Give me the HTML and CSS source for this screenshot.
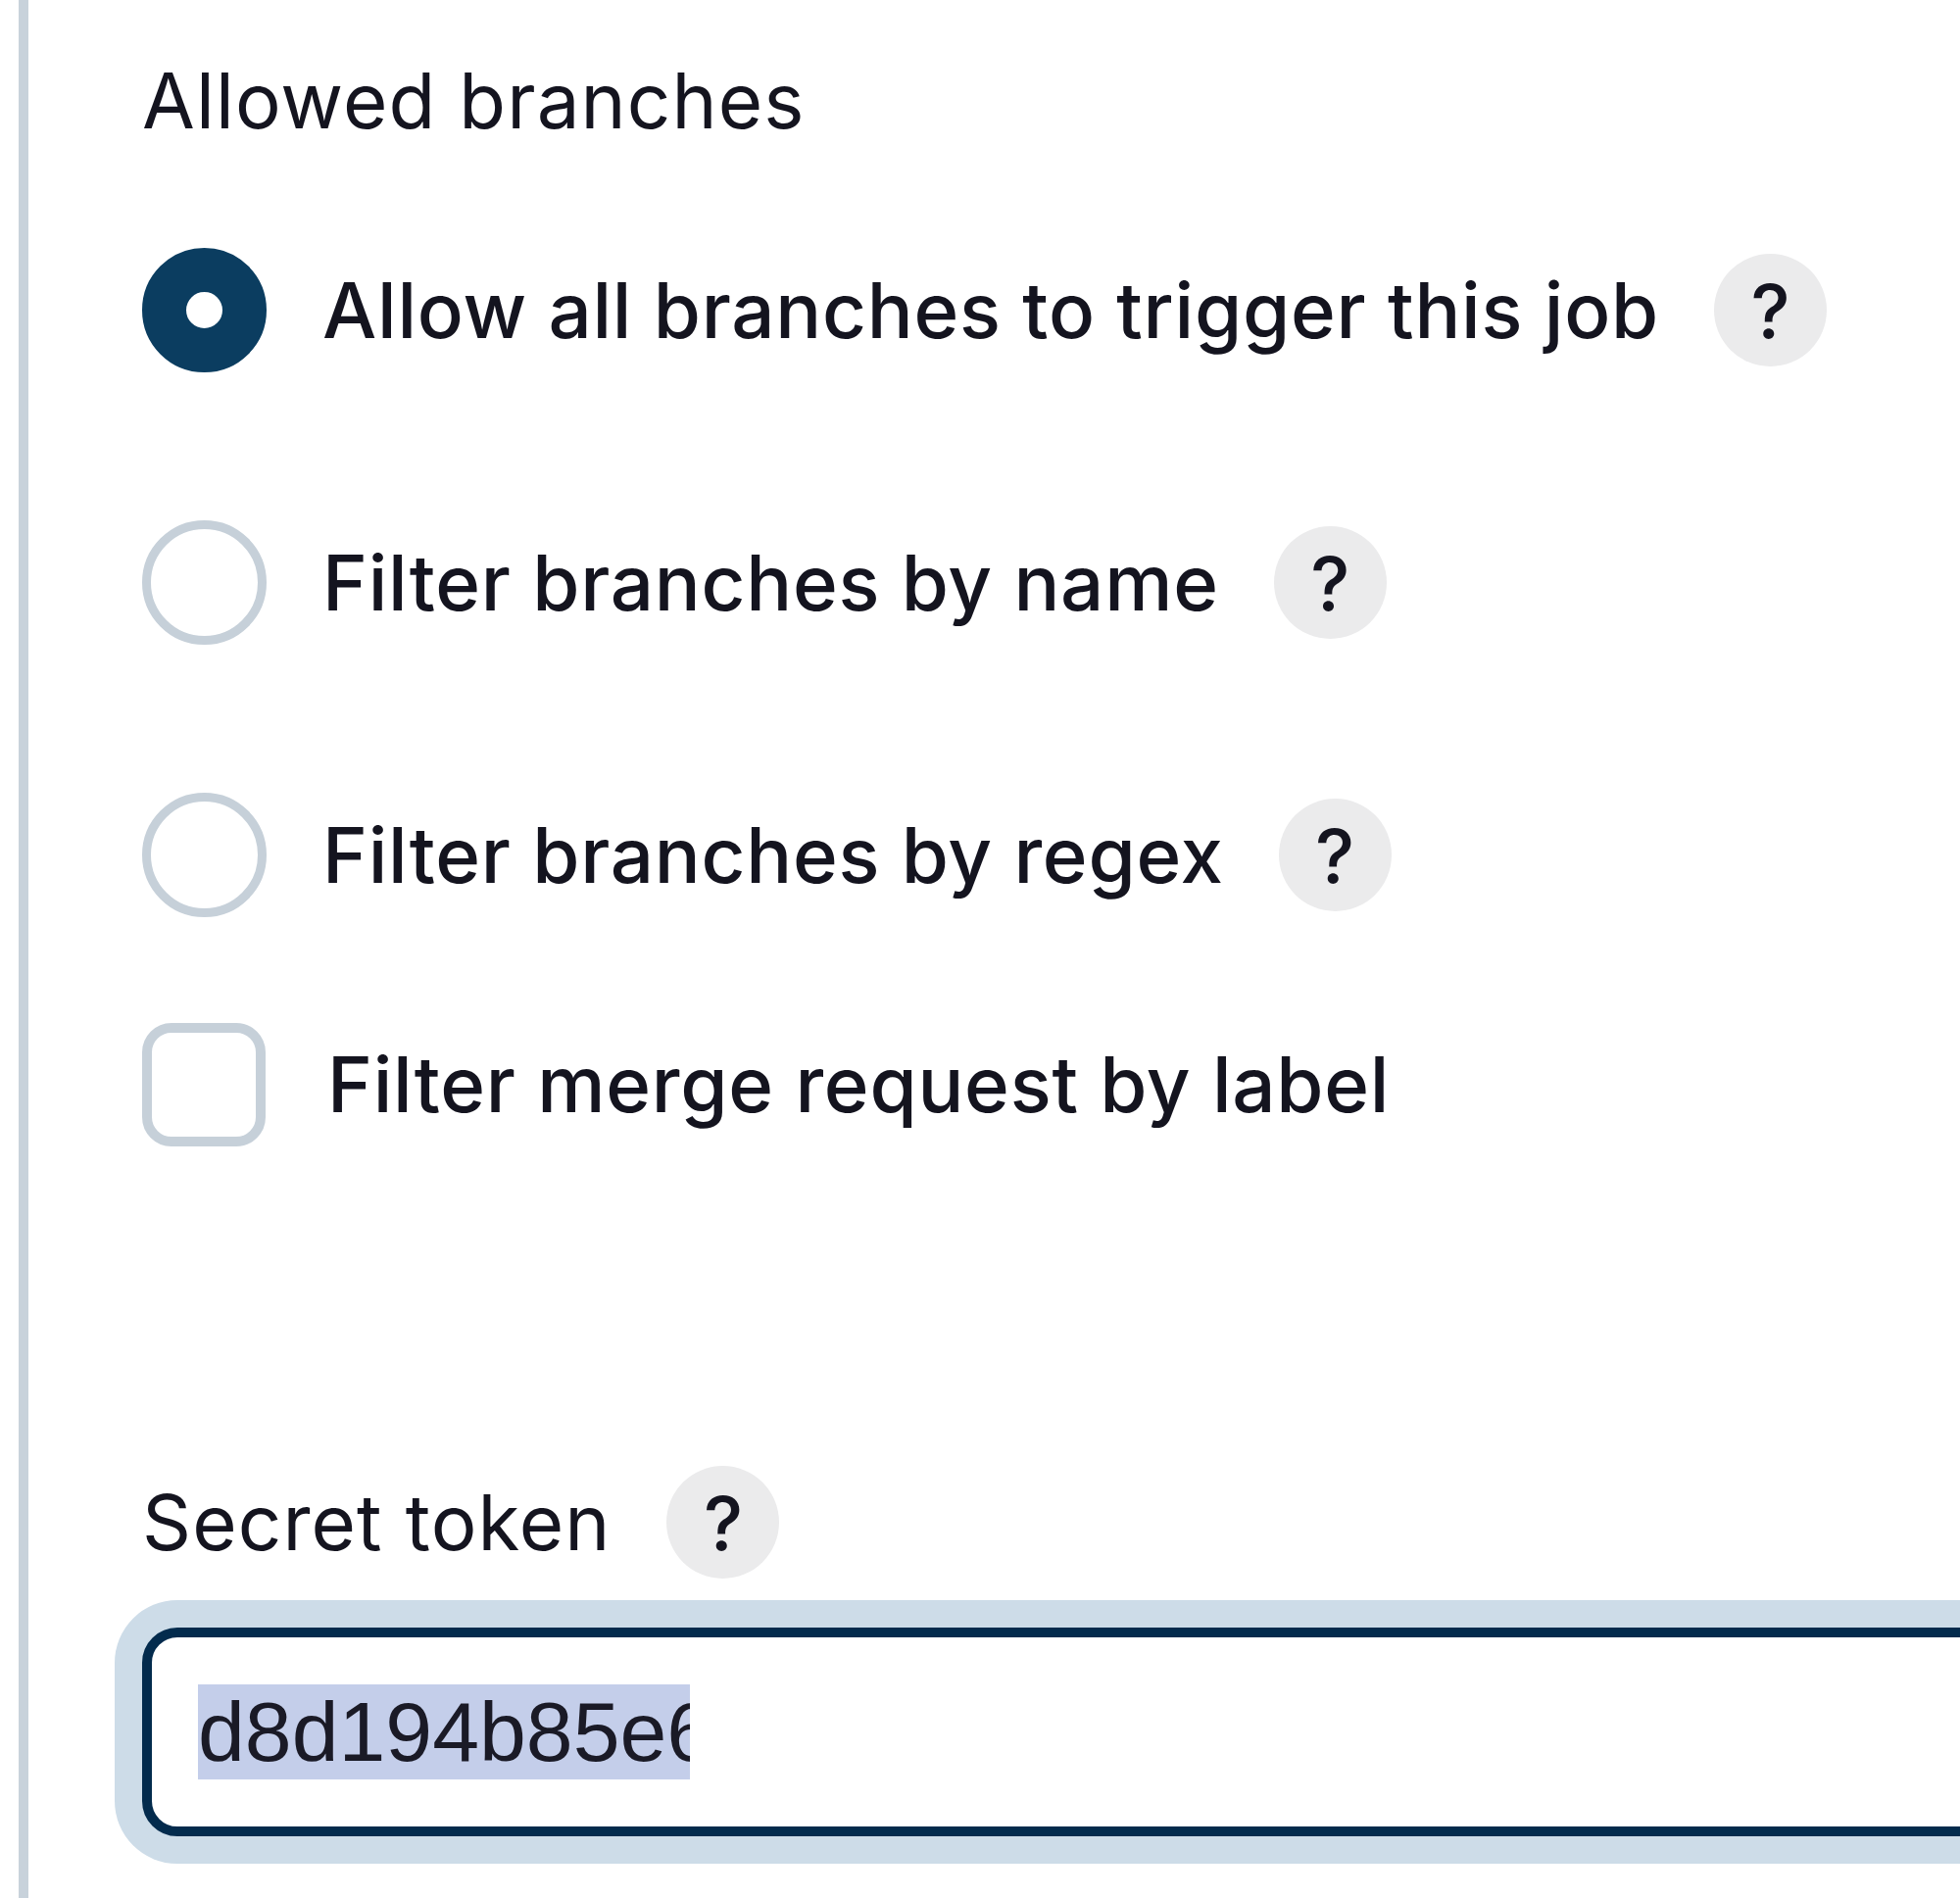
FILE: index.html
```html
<!DOCTYPE html>
<html lang="en">
<head>
<meta charset="utf-8">
<title>Allowed branches</title>
<link rel="stylesheet" href="styles.css">
</head>
<body>
<div class="panel">
  <div class="form-label form-label--top">Allowed branches</div>

  <div class="option option--first">
    <span class="radio radio--checked"></span>
    <span class="option-text">Allow all branches to trigger this job</span>
    <span class="help">?</span>
  </div>

  <div class="option">
    <span class="radio"></span>
    <span class="option-text">Filter branches by name</span>
    <span class="help">?</span>
  </div>

  <div class="option">
    <span class="radio"></span>
    <span class="option-text">Filter branches by regex</span>
    <span class="help">?</span>
  </div>

  <div class="option option--check">
    <span class="checkbox"></span>
    <span class="option-text">Filter merge request by label</span>
  </div>

  <div class="form-label form-label--help">
    <span>Secret token</span>
    <span class="help">?</span>
  </div>

  <div class="input">
    <span class="selection">d8d194b85e6</span>
  </div>
</div>
</body>
</html>
```

FILE: styles.css
```css
html, body {
  margin: 0;
  padding: 0;
  background: #ffffff;
  overflow: hidden;
}

body {
  width: 2000px;
  height: 1937px;
  font-family: "Inter", "Noto Sans", sans-serif;
  color: #14141f;
}

.panel {
  margin-left: 19px;
  border-left: 10px solid #c8d2db;
  padding-left: 116px;
  padding-top: 56px;
  height: 1937px;
  box-sizing: border-box;
}

.form-label {
  font-size: 78px;
  line-height: 94px;
  font-weight: 400;
  letter-spacing: 1.1px;
}

.option {
  display: flex;
  align-items: center;
  height: 127px;
  margin-top: 151px;
  font-size: 78px;
  font-weight: 500;
  letter-spacing: 0.75px;
}

.option--first {
  margin-top: 103px;
}

.option--check {
  margin-top: 107px;
}

.radio {
  flex: 0 0 auto;
  width: 127px;
  height: 127px;
  box-sizing: border-box;
  border-radius: 50%;
  border: 9px solid #c6d0d9;
  background: #ffffff;
}

.radio--checked {
  border: 45px solid #0b3d60;
}

.checkbox {
  flex: 0 0 auto;
  width: 126px;
  height: 126px;
  box-sizing: border-box;
  border-radius: 30px;
  border: 10px solid #c6d0d9;
  background: #ffffff;
}

.option-text {
  margin-left: 57px;
  white-space: nowrap;
}

.option--check .option-text {
  margin-left: 63px;
}

.help {
  flex: 0 0 auto;
  display: inline-flex;
  align-items: center;
  justify-content: center;
  width: 115px;
  height: 115px;
  border-radius: 50%;
  background: #ebebec;
  margin-left: 56px;
  font-size: 76px;
  font-weight: 500;
  letter-spacing: 0;
  line-height: 1;
  color: #14141f;
}

.form-label--help {
  display: flex;
  align-items: center;
  height: 115px;
  margin-top: 326px;
}

.form-label--help .help {
  margin-left: 57px;
}

.input {
  margin-top: 50px;
  width: 2300px;
  height: 213px;
  box-sizing: border-box;
  border: 10px solid #032b4d;
  border-radius: 36px;
  box-shadow: 0 0 0 28px #cddce8;
  background: #ffffff;
  padding-left: 47px;
  display: flex;
  align-items: center;
}

.selection {
  display: inline-block;
  width: 502px;
  overflow: hidden;
  white-space: nowrap;
  background: #c4ceea;
  font-family: "Liberation Sans", Arial, sans-serif;
  font-size: 86px;
  line-height: 97px;
  color: #1a1a26;
}
```
